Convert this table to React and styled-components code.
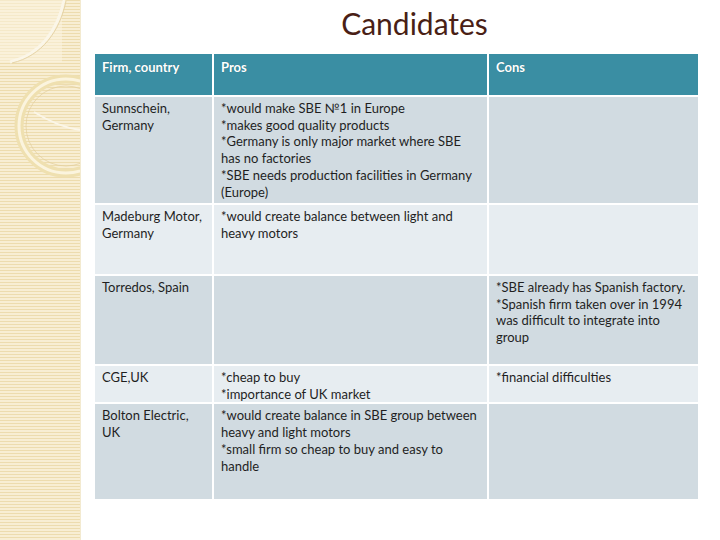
import styled, { createGlobalStyle } from "styled-components";

const Global = createGlobalStyle`
  html, body {
    margin: 0;
    padding: 0;
    background: #ffffff;
  }
  body {
    font-family: "Lato", "Open Sans", "Liberation Sans", sans-serif;
  }
`;

const Slide = styled.div`
  width: 720px;
  height: 540px;
  display: flex;
  overflow: hidden;
  background: #ffffff;
`;

const Strip = styled.div`
  position: relative;
  width: 80px;
  flex: none;
  background-color: #f4e7c6;
  background-image: repeating-linear-gradient(
    to bottom,
    #eddcae 0px,
    #eddcae 1px,
    #f8eed3 1px,
    #f8eed3 3px
  );
  border-right: 1px solid #f3ead0;
`;

const Deco = styled.svg`
  position: absolute;
  left: 0;
  top: 0;
`;

const Main = styled.div`
  flex: 1;
  display: flex;
  flex-direction: column;
  padding: 4px 23px 0 14px;
`;

const Title = styled.h1`
  margin: 0 0 12px 0;
  padding-left: 36px;
  text-align: center;
  font-family: "Lato", "Open Sans", sans-serif;
  font-weight: 400;
  font-size: 30px;
  line-height: 38px;
  color: #4a1f16;
`;

const Table = styled.table`
  width: 603px;
  table-layout: fixed;
  border-collapse: collapse;
  font-size: 13px;
  line-height: 16.7px;
  color: #1f1f1f;
`;

const Th = styled.th`
  width: ${({ w }) => w}px;
  height: 42px;
  background: #3a8ea3;
  color: #ffffff;
  font-weight: 700;
  text-align: left;
  vertical-align: top;
  padding: 5px 7px;
  border: 2px solid #ffffff;
  border-top: none;
  box-sizing: border-box;
  text-shadow: 0 0 1px rgba(0, 0, 0, 0.25);
`;

const Row = styled.tr`
  background: ${({ light }) => (light ? "#e7edf1" : "#d1dbe1")};
  height: ${({ h }) => h}px;
`;

const Td = styled.td`
  vertical-align: top;
  padding: 3px 7px 0;
  border: 2px solid #ffffff;
  box-sizing: border-box;
`;

const Line = styled.div`
  white-space: nowrap;
`;

const rows = [
  {
    h: 108,
    firm: ["Sunnschein,", "Germany"],
    pros: [
      "*would make SBE №1 in Europe",
      "*makes good quality products",
      "*Germany is only major market where SBE",
      "has no factories",
      "*SBE needs production facilities in Germany",
      "(Europe)",
    ],
    cons: [],
  },
  {
    h: 71,
    firm: ["Madeburg Motor,", "Germany"],
    pros: ["*would create balance between light and", "heavy motors"],
    cons: [],
  },
  {
    h: 90,
    firm: ["Torredos, Spain"],
    pros: [],
    cons: [
      "*SBE already has Spanish factory.",
      "*Spanish firm taken over in 1994",
      "was difficult to integrate into",
      "group",
    ],
  },
  {
    h: 38,
    firm: ["CGE,UK"],
    pros: ["*cheap to buy", "*importance of UK market"],
    cons: ["*financial difficulties"],
  },
  {
    h: 97,
    firm: ["Bolton Electric,", "UK"],
    pros: [
      "*would create balance in SBE group between",
      "heavy and light motors",
      "*small firm so cheap to buy and easy to",
      "handle",
    ],
    cons: [],
  },
];

const Lines = ({ items }) =>
  items.map((t, i) => <Line key={i}>{t}</Line>);

export default function App() {
  return (
    <>
      <Global />
      <Slide>
        <Strip>
          <Deco width="80" height="540" viewBox="0 0 80 540">
            <rect x="0" y="0" width="62" height="62" fill="#fbf4e0" opacity="0.55" />
            <path d="M10 62 C 40 55, 58 30, 64 0" stroke="#fbf6e8" strokeWidth="3" fill="none" />
            <path d="M10 62 C 40 55, 58 30, 64 0" stroke="#e6d4a8" strokeWidth="1" fill="none" transform="translate(2 1)" />
            <circle cx="66" cy="126" r="47" stroke="#efe0b0" strokeWidth="9" fill="none" />
            <circle cx="66" cy="126" r="47" stroke="#fbf4de" strokeWidth="3" fill="none" />
            <circle cx="66" cy="126" r="40" stroke="#e3cf9c" strokeWidth="1" fill="none" opacity="0.7" />
            <path d="M34 112 C 50 122, 66 128, 80 130" stroke="#fbf6e8" strokeWidth="2" fill="none" />
          </Deco>
        </Strip>
        <Main>
          <Title>Candidates</Title>
          <Table>
            <thead>
              <tr>
                <Th w={118} style={{ borderLeft: "none" }}>Firm, country</Th>
                <Th w={275}>Pros</Th>
                <Th w={210} style={{ borderRight: "none" }}>Cons</Th>
              </tr>
            </thead>
            <tbody>
              {rows.map((r, i) => (
                <Row key={i} h={r.h} light={i % 2 === 1}>
                  <Td style={{ borderLeft: "none" }}>
                    <Lines items={r.firm} />
                  </Td>
                  <Td>
                    <Lines items={r.pros} />
                  </Td>
                  <Td style={{ borderRight: "none" }}>
                    <Lines items={r.cons} />
                  </Td>
                </Row>
              ))}
            </tbody>
          </Table>
        </Main>
      </Slide>
    </>
  );
}
